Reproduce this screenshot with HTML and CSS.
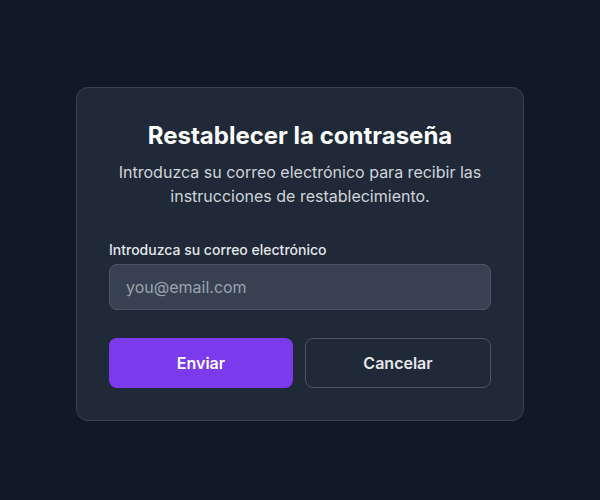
FILE: index.html
```html
<!DOCTYPE html>
<html lang="es">
<head>
<meta charset="utf-8">
<link rel="stylesheet" href="styles.css">
</head>
<body>
<main class="page">
  <section class="card">
    <header class="head">
      <h1 class="title">Restablecer la contraseña</h1>
      <p class="desc">Introduzca su correo electrónico para recibir las instrucciones de restablecimiento.</p>
    </header>
    <form class="form">
      <label class="label" for="email">Introduzca su correo electrónico</label>
      <input class="input" id="email" type="email" placeholder="you@email.com">
      <div class="actions">
        <button type="button" class="btn btn-primary">Enviar</button>
        <button type="button" class="btn btn-secondary">Cancelar</button>
      </div>
    </form>
  </section>
</main>
</body>
</html>
```
FILE: styles.css
```css
* { box-sizing: border-box; }
html, body { margin: 0; padding: 0; }
body {
  background: #111827;
  font-family: Inter, "Noto Sans", sans-serif;
  color: #f9fafb;
}
.page {
  min-height: 500px;
  display: flex;
  justify-content: center;
  align-items: flex-start;
  padding-top: 87px;
}
.card {
  width: 448px;
  background: #1f2937;
  border: 1px solid #374151;
  border-radius: 12px;
  padding: 32px;
}
.head { text-align: center; margin-bottom: 32px; }
.title {
  margin: 0;
  font-size: 24px;
  line-height: 32px;
  font-weight: 700;
  color: #ffffff;
}
.desc {
  margin: 8px 0 0;
  font-size: 16px;
  line-height: 24px;
  color: #d1d5db;
}
.form { display: flex; flex-direction: column; }
.label {
  font-size: 14px;
  line-height: 20px;
  font-weight: 500;
  color: #e5e7eb;
  margin-bottom: 4px;
}
.input {
  height: 46px;
  background: #374151;
  border: 1px solid #4b5563;
  border-radius: 8px;
  padding: 0 16px;
  font-family: inherit;
  font-size: 16px;
  color: #f9fafb;
  outline: none;
}
.input::placeholder { color: #9ca3af; }
.actions {
  display: flex;
  gap: 12px;
  margin-top: 28px;
}
.btn {
  flex: 1 1 0%;
  height: 50px;
  border-radius: 8px;
  font-family: inherit;
  font-size: 16px;
  font-weight: 600;
  padding: 0 16px;
  cursor: pointer;
}
.btn-primary {
  background: #7c3aed;
  color: #ffffff;
  border: none;
}
.btn-secondary {
  background: transparent;
  color: #e5e7eb;
  border: 1px solid #4b5563;
}
```
